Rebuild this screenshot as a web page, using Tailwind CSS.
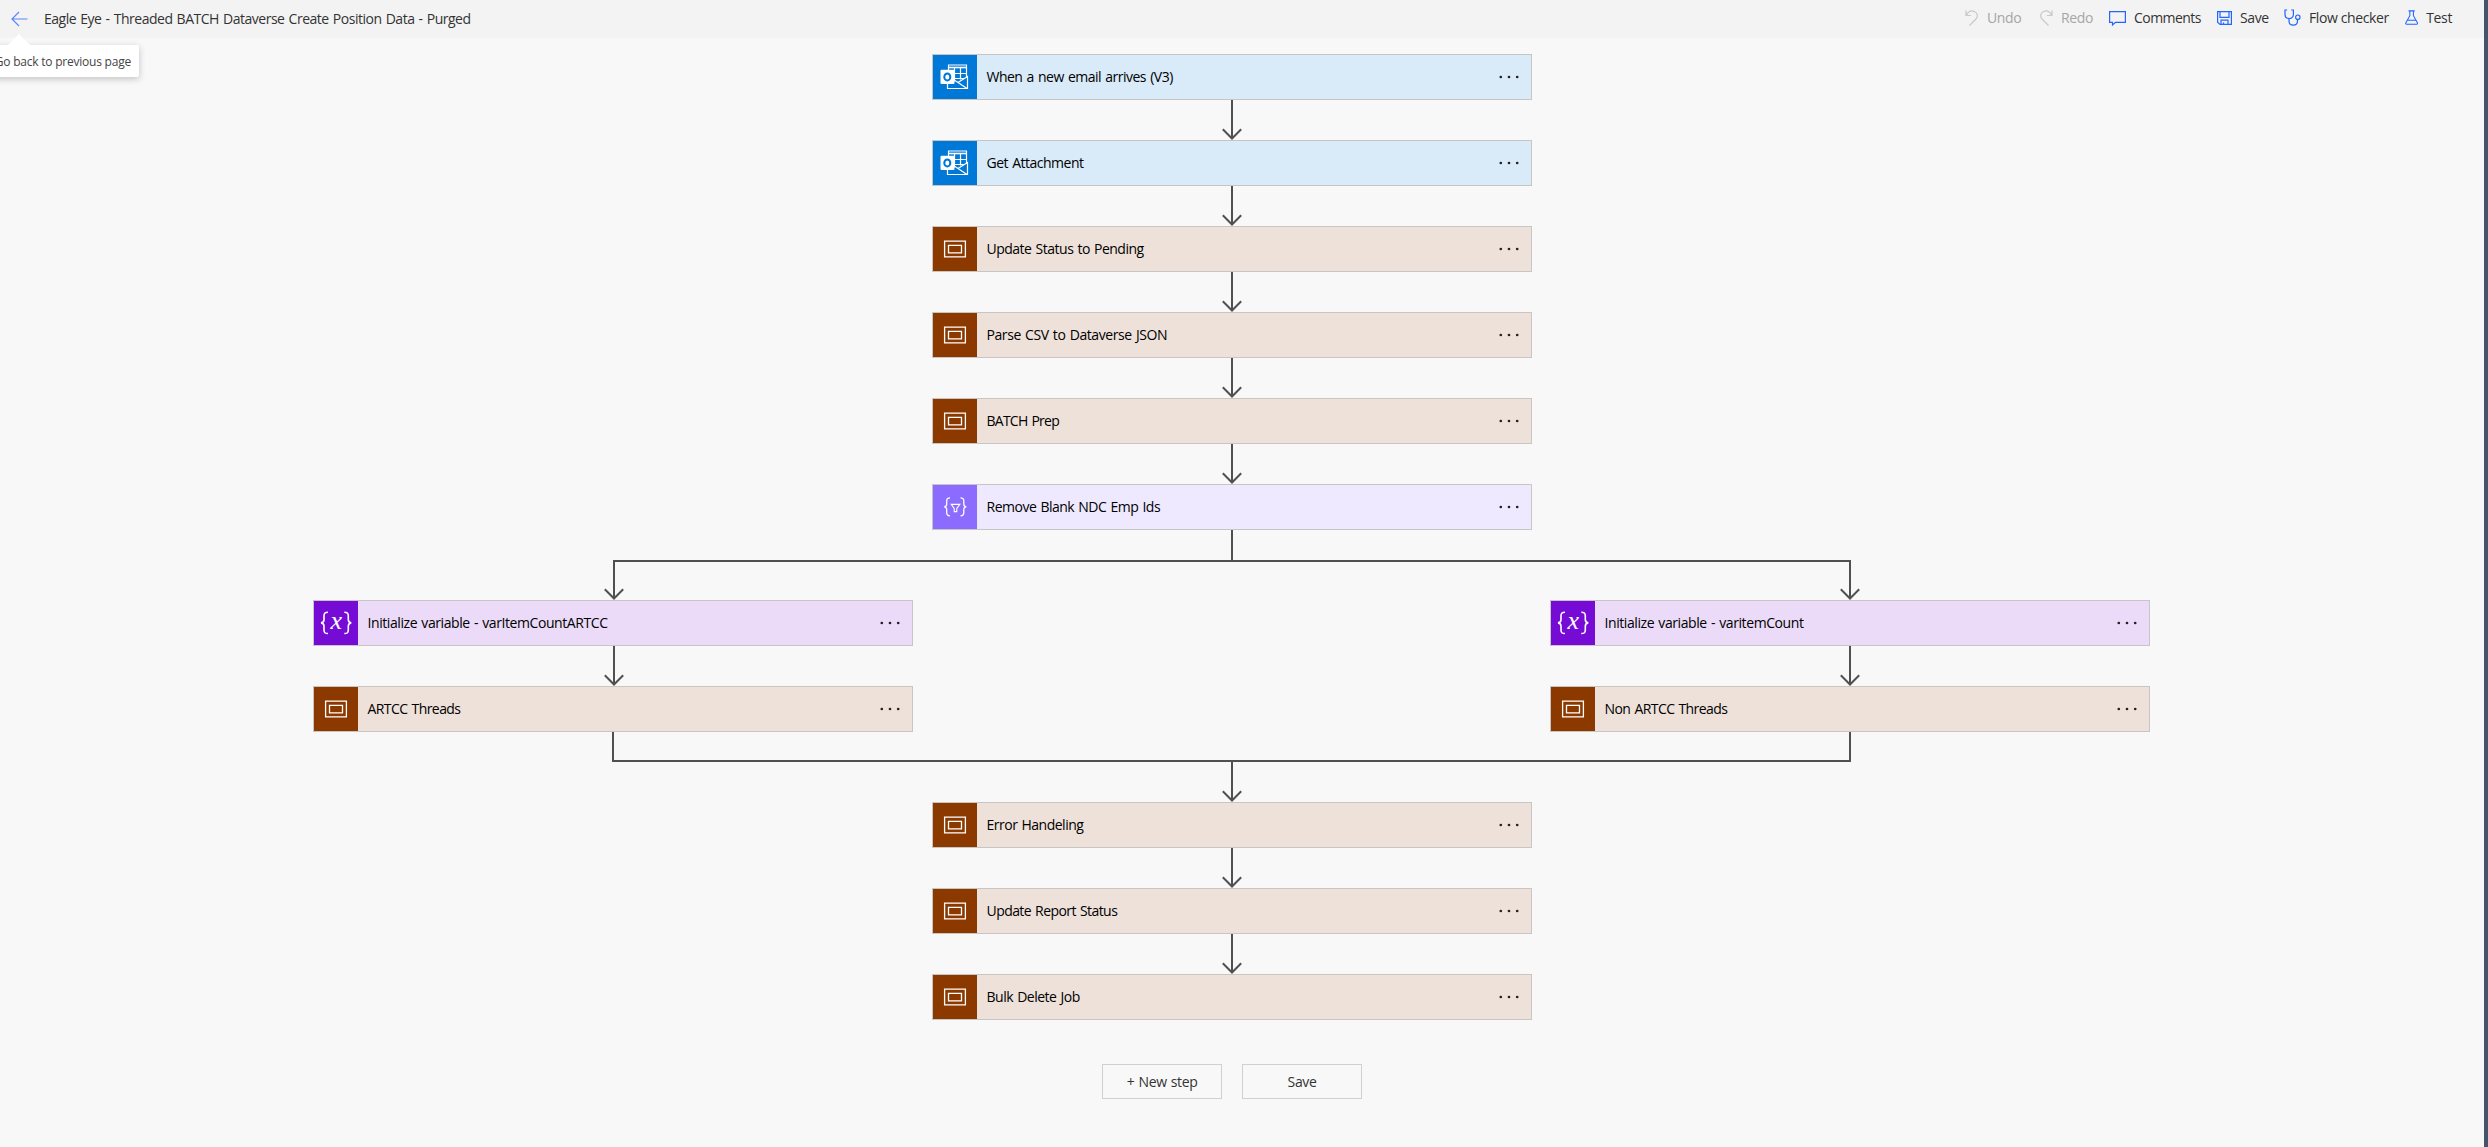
<!DOCTYPE html>
<html lang="en">
<head>
<meta charset="utf-8">
<title>Flow editor</title>
<script src="https://cdn.jsdelivr.net/npm/@tailwindcss/browser@4"></script>
</head>
<body class="relative w-[2488px] h-[1147px] overflow-hidden bg-[#f8f8f8] font-['Open_Sans','Noto_Sans',sans-serif] text-[14px] tracking-[-0.38px] text-black">

<svg class="hidden">
  <symbol id="outlook" viewBox="0 0 44 44">
    <g fill="none" stroke="#fff" stroke-width="1.2">
      <path d="M15.5 15v-5h18v13"/><path d="M15.5 12.500h18" stroke-width="1.6"/>
      <path d="M21.500 12.500v14M27.500 12.500v12M15.500 18.500h18M21 23.500h11"/>
      <path d="M14.500 28v5.500h20v-12l-9.500 6M22 25.500l12 8"/>
    </g>
    <rect x="7.500" y="14.800" width="14" height="14.200" rx="1" fill="#fff"/>
    <ellipse cx="14.300" cy="21.900" rx="3" ry="3.500" fill="none" stroke="#0078d7" stroke-width="2"/>
  </symbol>
  <symbol id="scope" viewBox="0 0 44 44">
    <g fill="none" stroke="#fff" stroke-width="1.300"><path d="M11.600 14.200h20.800v15.600H11.600z"/><path d="M15.500 18.300h13v7.500h-13z"/></g>
  </symbol>
  <symbol id="filter" viewBox="0 0 44 44">
    <g fill="none" stroke="#fff" stroke-width="1.300">
      <path d="M17 12.800c-2.500 0-3.300.8-3.300 3v3.200c0 1.800-.8 2.700-2.500 2.800 1.700.1 2.500 1 2.500 2.800v3.200c0 2.200.8 3 3.300 3"/>
      <path d="M27.500 12.800c2.500 0 3.300.8 3.300 3v3.200c0 1.800.8 2.700 2.500 2.800-1.700.1-2.500 1-2.500 2.800v3.200c0 2.200-.8 3-3.300 3"/>
      <path d="M18.200 19.400h8.600l-3 4v3.200h-2.600v-3.200z" stroke-width="1.100"/>
    </g>
  </symbol>
  <symbol id="variable" viewBox="0 0 44 44">
    <g fill="none" stroke="#fff" stroke-width="1.600">
      <path d="M14 11.300c-3.300 0-4 .9-4 3.500v3.700c0 2.200-.8 3.200-3 3.400 2.200.2 3 1.200 3 3.400v3.700c0 2.600.7 3.500 4 3.500"/>
      <path d="M30.300 11.300c3.300 0 4 .9 4 3.500v3.700c0 2.200.8 3.200 3 3.400-2.200.2-3 1.200-3 3.400v3.700c0 2.600-.7 3.500-4 3.500"/>
    </g>
    <text x="16.600" y="28.300" font-family="Liberation Serif, serif" font-style="italic" font-size="26" fill="#fff">x</text>
  </symbol>
  <symbol id="dots" viewBox="0 0 20 4"><g fill="#222"><circle cx="1.800" cy="2" r="1.350"/><circle cx="10" cy="2" r="1.350"/><circle cx="18.200" cy="2" r="1.350"/></g></symbol>
  <symbol id="arrow" viewBox="0 0 22 40"><path d="M11 0v38M1.800 29.300L11 38.500l9.200-9.200" fill="none" stroke="#505050" stroke-width="2"/></symbol>
</svg>

<header class="flex h-[38px] w-[2484px] items-center bg-[#f3f3f3] text-[#333]">
  <svg class="ml-[11px] mt-[-1px] h-4 w-[17px]" viewBox="0 0 17 16" fill="none" stroke="#5b86ff" stroke-width="1.200"><path d="M1 8h15.500M8 1L1 8l7 7"/></svg>
  <h1 class="ml-4 whitespace-nowrap pb-px tracking-[-0.49px] [word-spacing:1px]">Eagle Eye - Threaded BATCH Dataverse Create Position Data - Purged</h1>
  <nav class="ml-auto mr-8 flex h-full items-center whitespace-nowrap pb-[3px]">
    <div class="flex w-[74px] items-center text-[#a6a6a6]">
      <svg class="mr-2 h-4 w-[14px]" viewBox="0 0 14 16" fill="none" stroke="#c8c8c8" stroke-width="1.200"><path d="M1 .5v5h5M1 5.500C3 2 6-.2 9.500 1.500c3.500 1.800 3.500 5.500 1.500 7.500l-6.500 6.500"/></svg>Undo</div>
    <div class="flex w-[70px] items-center text-[#a6a6a6]">
      <svg class="mr-2 h-4 w-[14px]" viewBox="0 0 14 16" fill="none" stroke="#c8c8c8" stroke-width="1.200"><path d="M13 .5v5H8M13 5.500C11 2 8-.2 4.500 1.500 1 3.300 1 7 3 9l6.500 6.500"/></svg>Redo</div>
    <div class="flex w-[108px] items-center tracking-[-0.55px]">
      <svg class="mr-2 h-4 w-[17px]" viewBox="0 0 17 16" fill="none" stroke="#2266ff" stroke-width="1.200"><path d="M.6 1.600h15.800v10.800H6.500L3.500 15v-2.600H.6z"/></svg>Comments</div>
    <div class="flex w-[67px] items-center">
      <svg class="mr-2 h-4 w-[15px]" viewBox="0 0 15 16" fill="none" stroke="#2266ff" stroke-width="1.200"><path d="M.6 1.600h13.800v12.800H3L.6 12.200zM3 1.600v5.800h9V1.600M4 14.400v-4.300h7v4.300M6.500 14.400v-2"/></svg>Save</div>
    <div class="flex w-[121px] items-center">
      <svg class="mr-2 h-[17px] w-[17px]" viewBox="0 0 17 17" fill="none" stroke="#2266ff" stroke-width="1.200"><path d="M3.200 1H1v4.500C1 8 2.700 9.500 5 9.500S9.400 8 9.400 5.500V1H7.200M5 9.500V12c0 2.600 1.600 4.200 4.200 4.200s4.300-1.600 4.300-4.200v-1.500"/><circle cx="13.800" cy="8.200" r="2.200"/></svg>Flow checker</div>
    <div class="flex w-[47px] items-center">
      <svg class="mr-2 h-[17px] w-[15px]" viewBox="0 0 15 17" fill="none" stroke="#2266ff" stroke-width="1.200"><path d="M4 1h7M5.500 1v5.500L1 14.500c-.5.900-.1 1.600.9 1.600h11.200c1 0 1.400-.7.900-1.600L9.500 6.500V1M3 11.500h9"/></svg>Test</div>
  </nav>
</header>

<div class="absolute left-[-11px] top-[45px] flex h-8 w-[150px] items-center justify-end rounded-[2px] bg-white pr-2 pt-[1px] text-[12px] tracking-[-0.22px] whitespace-nowrap text-[#444] shadow-[0_2px_7px_rgba(0,0,0,0.22)]">Go back to previous page</div>
<svg class="absolute left-[7px] top-[34px] h-[12px] w-6" viewBox="0 0 24 12"><path d="M0 12L12 0l12 12z" fill="#fff"/></svg>
<div class="absolute right-0 top-0 h-full w-1 bg-[#44546a]"></div>

<main class="w-[1837px] ml-[313px] pt-4">
  <div id="top" class="ml-[619px] flex w-[600px] flex-col items-center"></div>
  <svg class="block h-[70px] w-[1837px]" viewBox="0 0 1837 70" fill="none" stroke="#505050" stroke-width="2"><path d="M919 0v31M301 68V31h1236v37M291.800 59.300l9.200 9.200 9.200-9.200M1527.800 59.300l9.200 9.200 9.200-9.200"/></svg>
  <div class="flex justify-between">
    <div id="left" class="flex w-[600px] flex-col items-center"></div>
    <div id="right" class="flex w-[600px] flex-col items-center"></div>
  </div>
  <svg class="block h-[70px] w-[1837px]" viewBox="0 0 1837 70" fill="none" stroke="#505050" stroke-width="2"><path d="M300 0v29h1237V0M919 29v39M909.800 59.300l9.200 9.200 9.200-9.200"/></svg>
  <div id="bottom" class="ml-[619px] flex w-[600px] flex-col items-center"></div>
  <div class="mt-11 ml-[789px] flex gap-5 text-[#333]">
    <button class="h-[35px] w-[120px] border border-[#d0d0d0] tracking-[-0.4px] [word-spacing:1px]">+ New step</button>
    <button class="h-[35px] w-[120px] border border-[#d0d0d0]">Save</button>
  </div>
</main>

<script>
const kinds = {
  outlook: ['bg-[#0078d7]', 'bg-[#d9eaf8]'],
  scope: ['bg-[#8c3900]', 'bg-[#eee1da]'],
  filter: ['bg-[#8c6cff]', 'bg-[#eee9ff]'],
  variable: ['bg-[#770bd6]', 'bg-[#ebdbf8]'],
};
const normal = 'tracking-[-0.5px]', loose = 'tracking-[-0.42px]', tight = 'tracking-[-0.57px]', tighter = 'tracking-[-0.75px]';
const columns = {
  top: [['outlook', 'When a new email arrives (V3)', normal], ['outlook', 'Get Attachment', normal], ['scope', 'Update Status to Pending', normal], ['scope', 'Parse CSV to Dataverse JSON', loose], ['scope', 'BATCH Prep', tighter], ['filter', 'Remove Blank NDC Emp Ids', normal]],
  left: [['variable', 'Initialize variable - varItemCountARTCC', loose], ['scope', 'ARTCC Threads', tight]],
  right: [['variable', 'Initialize variable - varitemCount', loose], ['scope', 'Non ARTCC Threads', tight]],
  bottom: [['scope', 'Error Handeling', normal], ['scope', 'Update Report Status', tight], ['scope', 'Bulk Delete Job', normal]],
};
const arrow = {
  top: 'h-10 w-[22px]', bottom: 'h-10 w-[22px]', right: 'h-10 w-[22px]', left: 'h-10 w-[22px] ml-[2px]',
};
for (const [id, cards] of Object.entries(columns)) {
  document.getElementById(id).innerHTML = cards.map(([kind, label, tracking]) =>
    `<div class="flex h-[46px] w-full items-center border border-[#c8c6c4] ${kinds[kind][1]}">
      <div class="h-11 w-11 ${kinds[kind][0]}"><svg class="h-11 w-11"><use href="#${kind}"/></svg></div>
      <span class="ml-[9.5px] flex-1 whitespace-nowrap pb-px [word-spacing:1px] ${tracking}">${label}</span>
      <svg class="mr-[12px] h-1 w-5"><use href="#dots"/></svg>
    </div>`).join(`<svg class="${arrow[id]}"><use href="#arrow"/></svg>`);
}
</script>
</body>
</html>
